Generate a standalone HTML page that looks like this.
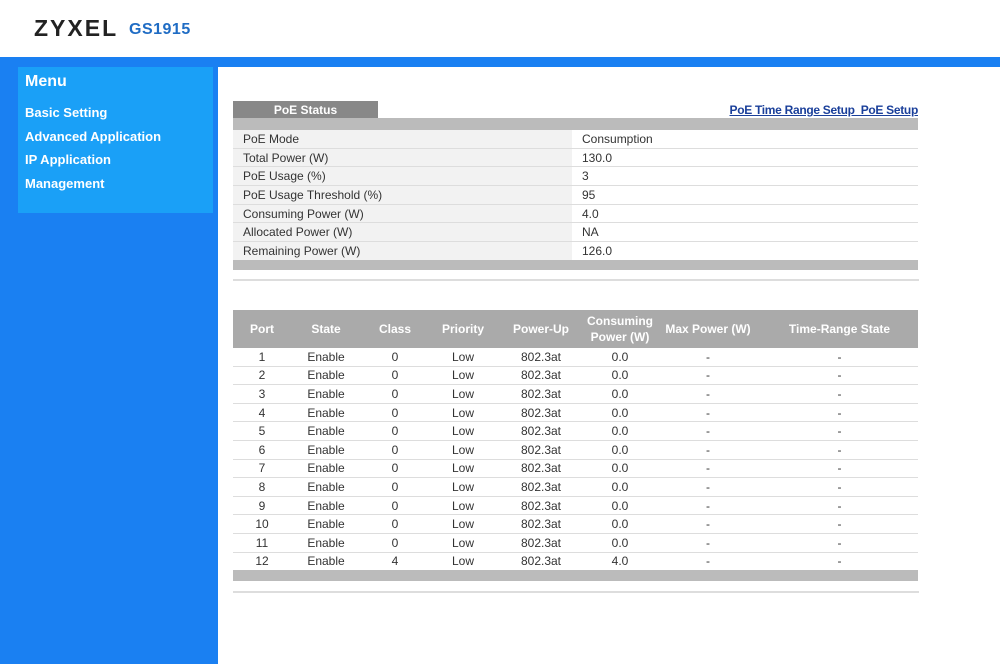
<!DOCTYPE html><html><head><style>
body{margin:0;width:1000px;height:664px;position:relative;overflow:hidden;background:#fff;font-family:"Liberation Sans",sans-serif;}
.a{position:absolute}
.hdr{left:0;top:0;width:1000px;height:57px;background:#fff}
.logo{left:34px;top:15px;font-size:23px;font-weight:bold;letter-spacing:2px;color:#222}
.model{left:129px;top:21px;font-size:16px;font-weight:bold;color:#1f6cc4;letter-spacing:0.5px}
.bar{left:0;top:57px;width:1000px;height:10px;background:#1a80f2}
.side{left:0;top:57px;width:218px;height:607px;background:#1a80f2}
.menu{left:18px;top:67px;width:195px;height:146px;background:#1aa0f7;color:#fff;font-weight:bold}
.menu div{position:absolute;left:7px;font-size:13px}
.tab{left:233px;top:101px;width:145px;height:17px;background:#888;color:#fff;font-weight:bold;font-size:12px;text-align:center;line-height:18px}
.links{right:82px;top:103px;font-size:12px;font-weight:bold;color:#1a3f9a;text-decoration:underline;letter-spacing:-0.3px}
table{border-collapse:collapse;font-size:12px;color:#333}
.t1{left:233px;top:118px;width:685px;border-top:12px solid #bbb;border-bottom:10px solid #bbb;background:#f2f2f2}
.t1 td{height:17.7px;border-bottom:1px solid #ddd;padding:0 0 0 10px}
.t1 td+td{background:#fff;width:336px}
.line{left:233px;width:686px;height:2px;background:#ddd}
.t2{left:233px;top:310px;width:685px;border-bottom:11px solid #bbb;text-align:center}
.t2 th{background:#aaa;color:#fff;font-size:12px;height:38px;padding:0;line-height:16px}
.t2 td{height:17.6px;border-bottom:1px solid #ddd;padding:0;background:#fff}
</style></head><body>
<div class="a hdr"></div>
<div class="a logo">ZYXEL</div>
<div class="a model">GS1915</div>
<div class="a side"></div><div class="a bar"></div>
<div class="a menu"><div style="top:6px;font-size:16px">Menu</div><div style="top:38px">Basic Setting</div><div style="top:62px">Advanced Application</div><div style="top:85px">IP Application</div><div style="top:109px">Management</div></div>
<div class="a tab">PoE Status</div>
<div class="a links">PoE Time Range Setup&nbsp; PoE Setup</div>
<table class="a t1">
<tr><td>PoE Mode</td><td>Consumption</td></tr>
<tr><td>Total Power (W)</td><td>130.0</td></tr>
<tr><td>PoE Usage (%)</td><td>3</td></tr>
<tr><td>PoE Usage Threshold (%)</td><td>95</td></tr>
<tr><td>Consuming Power (W)</td><td>4.0</td></tr>
<tr><td>Allocated Power (W)</td><td>NA</td></tr>
<tr><td>Remaining Power (W)</td><td>126.0</td></tr>
</table>
<div class="a line" style="top:279px"></div>
<table class="a t2">
<tr><th style="width:58px">Port</th><th style="width:70px">State</th><th style="width:68px">Class</th><th style="width:68px">Priority</th><th style="width:88px">Power-Up</th><th style="width:70px">Consuming<br>Power (W)</th><th style="width:106px">Max Power (W)</th><th>Time-Range State</th></tr>
<tr><td>1</td><td>Enable</td><td>0</td><td>Low</td><td>802.3at</td><td>0.0</td><td>-</td><td>-</td></tr>
<tr><td>2</td><td>Enable</td><td>0</td><td>Low</td><td>802.3at</td><td>0.0</td><td>-</td><td>-</td></tr>
<tr><td>3</td><td>Enable</td><td>0</td><td>Low</td><td>802.3at</td><td>0.0</td><td>-</td><td>-</td></tr>
<tr><td>4</td><td>Enable</td><td>0</td><td>Low</td><td>802.3at</td><td>0.0</td><td>-</td><td>-</td></tr>
<tr><td>5</td><td>Enable</td><td>0</td><td>Low</td><td>802.3at</td><td>0.0</td><td>-</td><td>-</td></tr>
<tr><td>6</td><td>Enable</td><td>0</td><td>Low</td><td>802.3at</td><td>0.0</td><td>-</td><td>-</td></tr>
<tr><td>7</td><td>Enable</td><td>0</td><td>Low</td><td>802.3at</td><td>0.0</td><td>-</td><td>-</td></tr>
<tr><td>8</td><td>Enable</td><td>0</td><td>Low</td><td>802.3at</td><td>0.0</td><td>-</td><td>-</td></tr>
<tr><td>9</td><td>Enable</td><td>0</td><td>Low</td><td>802.3at</td><td>0.0</td><td>-</td><td>-</td></tr>
<tr><td>10</td><td>Enable</td><td>0</td><td>Low</td><td>802.3at</td><td>0.0</td><td>-</td><td>-</td></tr>
<tr><td>11</td><td>Enable</td><td>0</td><td>Low</td><td>802.3at</td><td>0.0</td><td>-</td><td>-</td></tr>
<tr><td>12</td><td>Enable</td><td>4</td><td>Low</td><td>802.3at</td><td>4.0</td><td>-</td><td>-</td></tr>
</table>
<div class="a line" style="top:591px"></div>
</body></html>
